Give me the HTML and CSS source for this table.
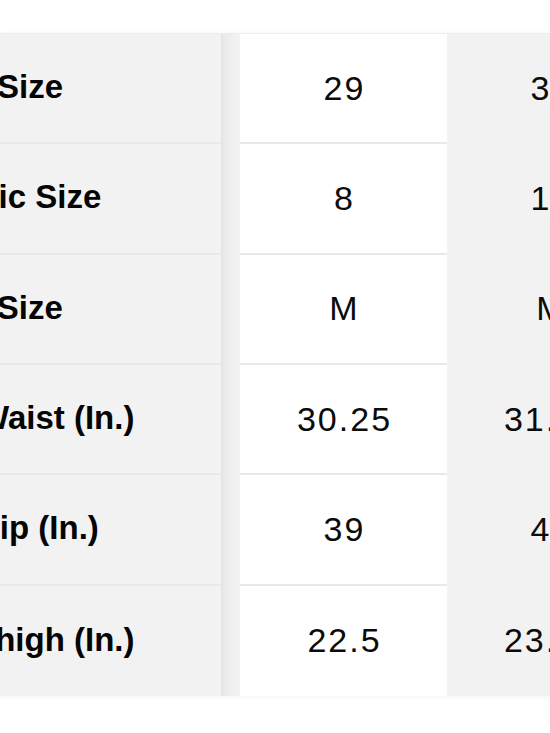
FILE: index.html
```html
<!DOCTYPE html>
<html lang="en">
<head>
<meta charset="utf-8">
<title>Size Chart</title>
<link rel="stylesheet" href="styles.css">
</head>
<body>
<div class="viewport">
  <div class="chart">
    <div class="shade"></div>

    <div class="cell label"><span class="txt t-r1">Denim Size</span></div>
    <div class="cell val">29</div>
    <div class="cell val alt">30</div>

    <div class="cell label"><span class="txt t-r2">Numeric Size</span></div>
    <div class="cell val">8</div>
    <div class="cell val alt">10</div>

    <div class="cell label"><span class="txt t-r3">Alpha Size</span></div>
    <div class="cell val">M</div>
    <div class="cell val alt">M</div>

    <div class="cell label"><span class="txt t-r4">Waist (In.)</span></div>
    <div class="cell val">30.25</div>
    <div class="cell val alt">31.25</div>

    <div class="cell label"><span class="txt t-r5">Hip (In.)</span></div>
    <div class="cell val">39</div>
    <div class="cell val alt">40</div>

    <div class="cell label last"><span class="txt t-r6">Thigh (In.)</span></div>
    <div class="cell val last">22.5</div>
    <div class="cell val alt last">23.25</div>
  </div>
</div>
</body>
</html>
```
FILE: styles.css
```css
html, body {
  margin: 0;
  padding: 0;
  background: #ffffff;
  overflow: hidden;
}

.viewport {
  width: 550px;
  height: 733px;
  overflow: hidden;
  padding-top: 33px;
  box-sizing: border-box;
}

.chart {
  display: grid;
  grid-template-columns: 221px 19px 207px 207px;
  grid-auto-rows: 110.33px;
  width: 654px;
  border-top: 1px solid #ececec;
  box-shadow: 0 1px 6px rgba(0, 0, 0, 0.05);
}

.shade {
  grid-column: 2;
  grid-row: 1 / span 6;
  background: linear-gradient(to right, #e3e3e3 0, #ebebeb 4px, #efefef 10px, #f3f3f3 100%);
}

.cell {
  box-sizing: border-box;
  display: flex;
  align-items: center;
  border-bottom: 2px solid #e9e9e9;
  color: #0b0b0b;
}

.cell.last {
  border-bottom: none;
}

.label {
  background: #f2f2f2;
  overflow: hidden;
  white-space: nowrap;
  padding-bottom: 2px;
  font-family: "Liberation Sans", Arial, sans-serif;
  font-weight: bold;
  font-size: 33px;
  color: #050505;
}

.val {
  background: #ffffff;
  justify-content: center;
  font-family: "Liberation Sans", Arial, sans-serif;
  font-size: 34px;
  letter-spacing: 2px;
  padding-left: 2px;
}

.val.alt {
  background: #f2f2f2;
  border-bottom-color: #f2f2f2;
}

.txt {
  flex: none;
}

.t-r1 { margin-left: -113px; }
.t-r2 { margin-left: -106px; }
.t-r3 { margin-left: -104px; }
.t-r4 { margin-left: -22px; }
.t-r5 { margin-left: -24px; }
.t-r6 { margin-left: -25px; }
```
